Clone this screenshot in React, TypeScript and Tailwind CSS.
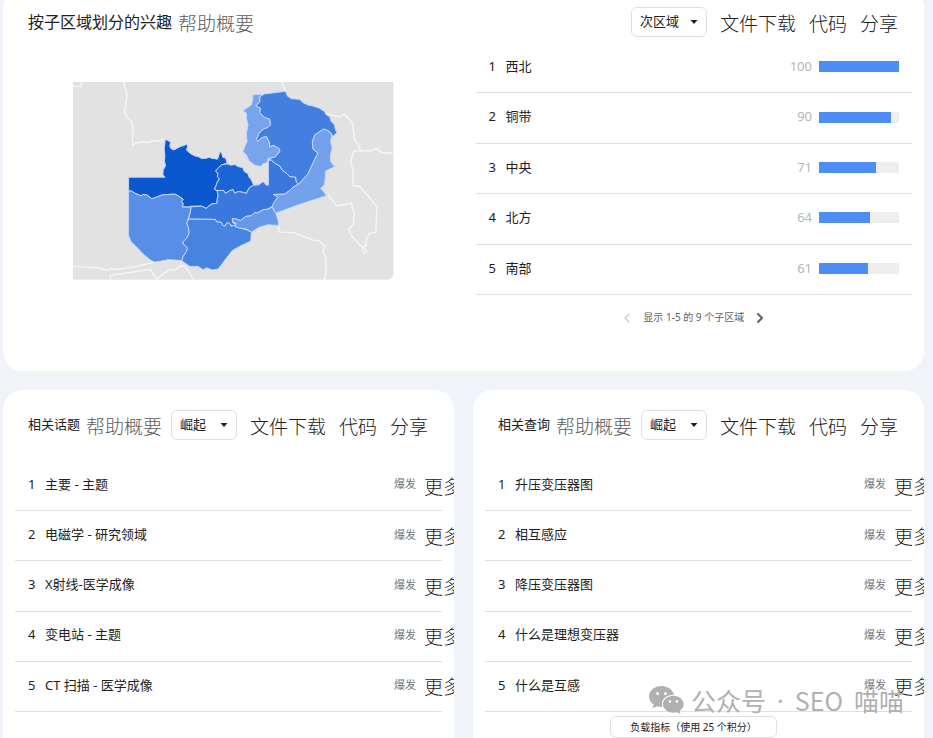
import { ChevronLeft, ChevronRight } from "lucide-react";

const regions = [
  { name: "西北", value: 100 },
  { name: "铜带", value: 90 },
  { name: "中央", value: 71 },
  { name: "北方", value: 64 },
  { name: "南部", value: 61 },
];

const topics = ["主要 - 主题", "电磁学 - 研究领域", "X射线-医学成像", "变电站 - 主题", "CT 扫描 - 医学成像"];
const queries = ["升压变压器图", "相互感应", "降压变压器图", "什么是理想变压器", "什么是互感"];

// Provinces of Zambia, drawn in map units
const provinces = [
  {
    name: "西北",
    color: "#0b57d0",
    points:
      "206,322 315,322 309,315 310,300 317,288 314,275 315,255 313,235 315,222 316,208 322,211 332,216 330,228 333,236 342,240 352,235 362,230 380,224 384,228 380,240 390,250 405,258 415,260 425,266 440,265 448,262 455,265 463,266 473,268 477,257 481,245 486,250 489,262 498,265 502,280 485,285 475,295 468,303 475,312 473,320 479,327 472,338 468,350 464,358 472,362 475,378 472,390 472,400 455,403 445,410 440,416 425,409 395,409 385,412 367,411 370,402 365,396 370,388 355,378 345,373 325,374 305,376 290,382 276,387 262,376 250,374 243,378 225,370 215,364 206,363",
  },
  {
    name: "西部",
    color: "#588ee7",
    points:
      "206,363 215,364 225,370 243,378 250,374 262,376 276,387 290,382 305,376 325,374 345,373 355,378 370,388 365,396 370,402 367,411 385,412 394,411 391,430 385,447 381,460 386,475 388,490 381,505 370,516 370,522 383,535 380,545 370,560 366,573 345,571 325,570 305,574 284,577 270,570 250,553 235,537 213,515 206,497",
  },
  {
    name: "中央",
    color: "#3b78dd",
    points:
      "472,362 492,362 497,370 510,362 520,359 525,370 535,365 545,366 560,370 565,360 570,352 582,346 598,345 605,338 613,336 618,345 626,346 626,272 635,270 645,280 660,288 667,300 680,310 690,320 708,322 710,335 717,343 700,352 690,362 675,373 642,374 655,382 645,395 637,410 625,418 610,420 592,430 585,428 575,438 558,440 542,452 530,448 518,446 518,458 530,465 522,472 510,462 502,458 495,470 488,466 485,458 470,456 467,449 386,448 391,430 394,411 425,409 440,416 445,410 455,403 472,400 472,390 475,378",
  },
  {
    name: "铜带",
    color: "#1c64d6",
    points:
      "502,282 515,286 525,284 535,290 550,294 553,304 565,312 568,322 575,330 582,346 570,352 565,360 560,370 545,366 535,365 525,370 520,359 510,362 497,370 492,362 472,362 464,358 468,350 472,338 479,327 473,320 475,312 468,303 475,295 485,285",
  },
  {
    name: "南部",
    color: "#4783e0",
    points:
      "386,448 467,449 470,456 485,458 488,466 495,470 502,458 510,462 515,470 522,466 538,474 560,480 575,487 573,514 545,527 518,542 500,565 485,585 475,598 458,601 440,594 430,600 415,590 390,590 375,580 366,573 370,560 380,545 383,535 370,522 370,516 381,505 388,490 386,475 381,460",
  },
  {
    name: "卢萨卡",
    color: "#6799e8",
    points:
      "637,412 648,430 655,450 657,467 625,465 600,472 575,487 560,478 540,475 525,470 530,462 518,455 518,446 530,448 542,452 558,440 575,438 585,428 592,430 610,420 625,418",
  },
  {
    name: "东部",
    color: "#73a1ec",
    points:
      "760,238 758,215 765,195 780,185 792,177 805,182 815,190 816,200 813,215 818,235 812,255 813,275 825,290 805,300 797,305 797,320 795,345 783,355 792,365 800,378 725,402 648,430 637,410 645,395 655,382 642,374 675,373 690,362 700,352 717,343 730,328 745,312 755,290 765,268 775,250",
  },
  {
    name: "北方",
    color: "#437fe1",
    points:
      "613,72 678,64 683,78 695,86 720,88 730,98 745,105 760,108 780,115 795,125 800,135 810,140 815,155 825,165 827,178 832,188 820,200 815,190 805,182 792,177 780,185 765,195 758,215 760,238 775,250 765,268 755,290 745,312 730,328 717,343 710,335 708,322 690,320 680,310 667,300 660,288 645,280 635,270 626,265 645,262 660,245 658,236 640,226 630,232 628,215 620,200 605,204 595,215 590,208 598,190 610,178 625,172 632,165 630,148 615,143 600,128 602,115 588,108 600,95 600,80",
  },
  {
    name: "卢阿普拉",
    color: "#77a4ed",
    points:
      "579,75 613,72 600,80 600,95 588,108 602,115 600,128 615,143 630,148 632,165 625,172 610,178 598,190 590,208 595,215 605,204 620,200 628,215 630,232 640,226 658,236 660,245 645,262 626,265 622,278 610,282 602,290 585,286 568,273 560,255 550,245 555,230 562,215 560,190 565,165 560,145 560,130 550,122 575,105 579,90",
  },
];

// Frontiers of the neighbouring countries
const frontiers = [
  "39,49 63,49 65,36",
  "191,36 194,50 202,72 198,100 194,126 203,145 214,154 221,180 217,205 219,226 230,218 250,216 265,218 278,212 290,214 300,211 316,208",
  "667,36 678,64",
  "795,125 806,132 820,136 840,140 853,132 868,146 880,163 884,208 895,222 903,242 883,244 873,275 880,300 881,347 900,350 925,377 952,412 949,488 930,490 920,510 920,528 912,530 922,545 912,551 909,533 890,514 874,495 868,480 882,462 884,432 875,400 855,404 832,408 806,376",
  "903,243 935,243 950,235 968,249 985,248 1002,252",
  "657,467 658,487 700,488 730,499 760,511 777,513 796,529 790,545 798,565 799,610 793,630",
  "39,589 80,592 120,595 142,602 155,597 170,600 230,590 284,577 325,570 366,573 390,590",
  "151,630 151,617 272,599 290,628 330,599 345,601 360,590 375,588 390,612 402,630",
];

function RegionMap() {
  return (
    <svg viewBox="39 36 963 594" className="block w-full rounded-br-lg" role="img" aria-label="赞比亚">
      <rect x="39" y="36" width="963" height="594" fill="#e2e2e2" />
      {frontiers.map((points) => (
        <polyline key={points} points={points} fill="none" stroke="#f7f7f7" strokeWidth="4" strokeLinejoin="round" />
      ))}
      {provinces.map((p) => (
        <polygon key={p.name} points={p.points} fill={p.color} stroke="#c4d8f8" strokeWidth="3" strokeLinejoin="round" />
      ))}
    </svg>
  );
}

function IconText({ children, muted = false }: { children: string; muted?: boolean }) {
  return (
    <button
      type="button"
      className={`shrink-0 pt-1 text-[19px] leading-6 font-light whitespace-nowrap ${
        muted ? "text-[#5c5c5c]" : "text-[#202020]"
      }`}
    >
      {children}
    </button>
  );
}

function Picker({ label, option, wide = false }: { label: string; option: string; wide?: boolean }) {
  return (
    <div className="relative">
      <select
        aria-label={label}
        className={`block h-[30px] appearance-none rounded-md border border-[#dfdfdf] bg-white pl-2 text-[13px] text-[#212121] ${
          wide ? "w-[76px]" : "w-[66px]"
        }`}
      >
        <option>{option}</option>
      </select>
      <svg viewBox="0 0 8 4" className="pointer-events-none absolute top-[13px] right-[9px] h-1 w-2" aria-hidden="true">
        <path d="M0.5 0h7L4 4z" fill="#212121" />
      </svg>
    </div>
  );
}

function CardHeader({ title, option, large = false }: { title: string; option: string; large?: boolean }) {
  return (
    <header className="flex h-[30px] items-center justify-between pr-[26px] pl-[25px]">
      <div className="flex items-center gap-[6px]">
        <h2 className={`whitespace-nowrap text-[#212121] ${large ? "text-base" : "text-[13px]"}`}>{title}</h2>
        <IconText muted>帮助概要</IconText>
      </div>
      <div className="flex items-center gap-[13px]">
        <Picker label={title} option={option} wide={large} />
        <IconText>文件下载</IconText>
        <IconText>代码</IconText>
        <IconText>分享</IconText>
      </div>
    </header>
  );
}

const rowClass = "flex items-center border-b border-[#e0e0e0] pb-[2px] pl-[13px] text-[13px] text-[#212121]";

function RelatedList({ items }: { items: string[] }) {
  return (
    <ol className="mx-3 mt-[21px] grid h-[251px] grid-rows-5">
      {items.map((item, i) => (
        <li key={item} className={rowClass}>
          <span className="w-[17px]">{i + 1}</span>
          <span className="flex-1">{item}</span>
          <span className="mr-2 text-[11px] text-[#757575]">爆发</span>
          <div className="flex w-[18px]">
            <IconText>更多</IconText>
          </div>
        </li>
      ))}
    </ol>
  );
}

function Watermark() {
  return (
    <div className="pointer-events-none absolute right-[20px] bottom-[22px] flex items-center gap-[11px] font-['Noto_Sans_CJK_SC',sans-serif] text-[25px] leading-8 whitespace-nowrap text-[#b0b0b0]">
      <svg viewBox="0 0 35 28" className="-mr-1 h-7 w-[35px]" aria-hidden="true">
        <path
          d="M12.5 0C5.6 0 0 4.7 0 10.500c0 3.300 1.800 6.200 4.700 8.100L3.500 22.500l4.500-2.300c1.700.5 3.500.8 5.500.7A9.800 9.800 0 0 1 13 18c0-5.100 5-9.200 11.300-9.200h.7C23.800 3.800 18.700 0 12.500 0z"
          fill="#b0b0b0"
        />
        <path
          d="M24.300 9.800c-5.700 0-10.300 3.800-10.300 8.500s4.600 8.500 10.300 8.500c1.300 0 2.500-.2 3.600-.5l3.600 1.700-.9-3.200c2.500-1.500 4.100-3.900 4.100-6.500 0-4.700-4.700-8.500-10.400-8.500z"
          fill="#b0b0b0"
        />
        <circle cx="8.500" cy="7.500" r="1.500" fill="#fff" />
        <circle cx="16.500" cy="7.500" r="1.500" fill="#fff" />
        <circle cx="21" cy="15.500" r="1.300" fill="#fff" />
        <circle cx="28" cy="15.500" r="1.300" fill="#fff" />
      </svg>
      <span>公众号</span>
      <span className="font-['Noto_Sans',sans-serif]">·</span>
      <span>SEO</span>
      <span>喵喵</span>
    </div>
  );
}

export default function App() {
  return (
    <main className="min-h-screen overflow-hidden bg-[#f0f4f9] pr-[9px] pl-[3px] font-['Noto_Sans','Noto_Sans_CJK_SC',sans-serif]">
      <section className="-mt-3 rounded-[20px] bg-white pt-[19px] pb-[31px]">
        <CardHeader title="按子区域划分的兴趣" option="次区域" large />
        <div className="mt-[6px] grid grid-cols-2">
          <div className="px-[70px] pt-[39px]">
            <RegionMap />
          </div>
          <div className="px-3">
            <ol className="grid h-[252px] grid-rows-5">
              {regions.map((r, i) => (
                <li key={r.name} className={rowClass}>
                  <span className="w-[17px]">{i + 1}</span>
                  <span className="flex-1">{r.name}</span>
                  <span className="mr-[7px] text-[#b5b5b5]">{r.value}</span>
                  <div className="mr-[13px] h-[11px] w-20 bg-[#eeeeee]">
                    <div className="h-full bg-[#4c8df6]" style={{ width: `${r.value}%` }} />
                  </div>
                </li>
              ))}
            </ol>
            <nav className="flex h-[45px] items-center justify-center gap-2 text-[10px] text-[#616161]">
              <button type="button" aria-label="上一页" disabled className="text-[#cccccc]">
                <ChevronLeft size={16} strokeWidth={2} />
              </button>
              <span>显示 1-5 的 9 个子区域</span>
              <button type="button" aria-label="下一页">
                <ChevronRight size={16} strokeWidth={3} />
              </button>
            </nav>
          </div>
        </div>
      </section>

      <div className="mt-[19px] grid grid-cols-2 gap-[19px]">
        <section className="overflow-hidden rounded-t-[20px] bg-white pt-5">
          <CardHeader title="相关话题" option="崛起" />
          <RelatedList items={topics} />
        </section>
        <section className="relative overflow-hidden rounded-t-[20px] bg-white pt-5">
          <CardHeader title="相关查询" option="崛起" />
          <RelatedList items={queries} />
          <div className="flex justify-center pt-1 pr-[10px]">
            <button
              type="button"
              className="h-[22px] w-[167px] rounded-md border border-[#dfdfdf] bg-white text-[10px] text-[#212121]"
            >
              负载指标（使用 25 个积分）
            </button>
          </div>
          <Watermark />
        </section>
      </div>
    </main>
  );
}
